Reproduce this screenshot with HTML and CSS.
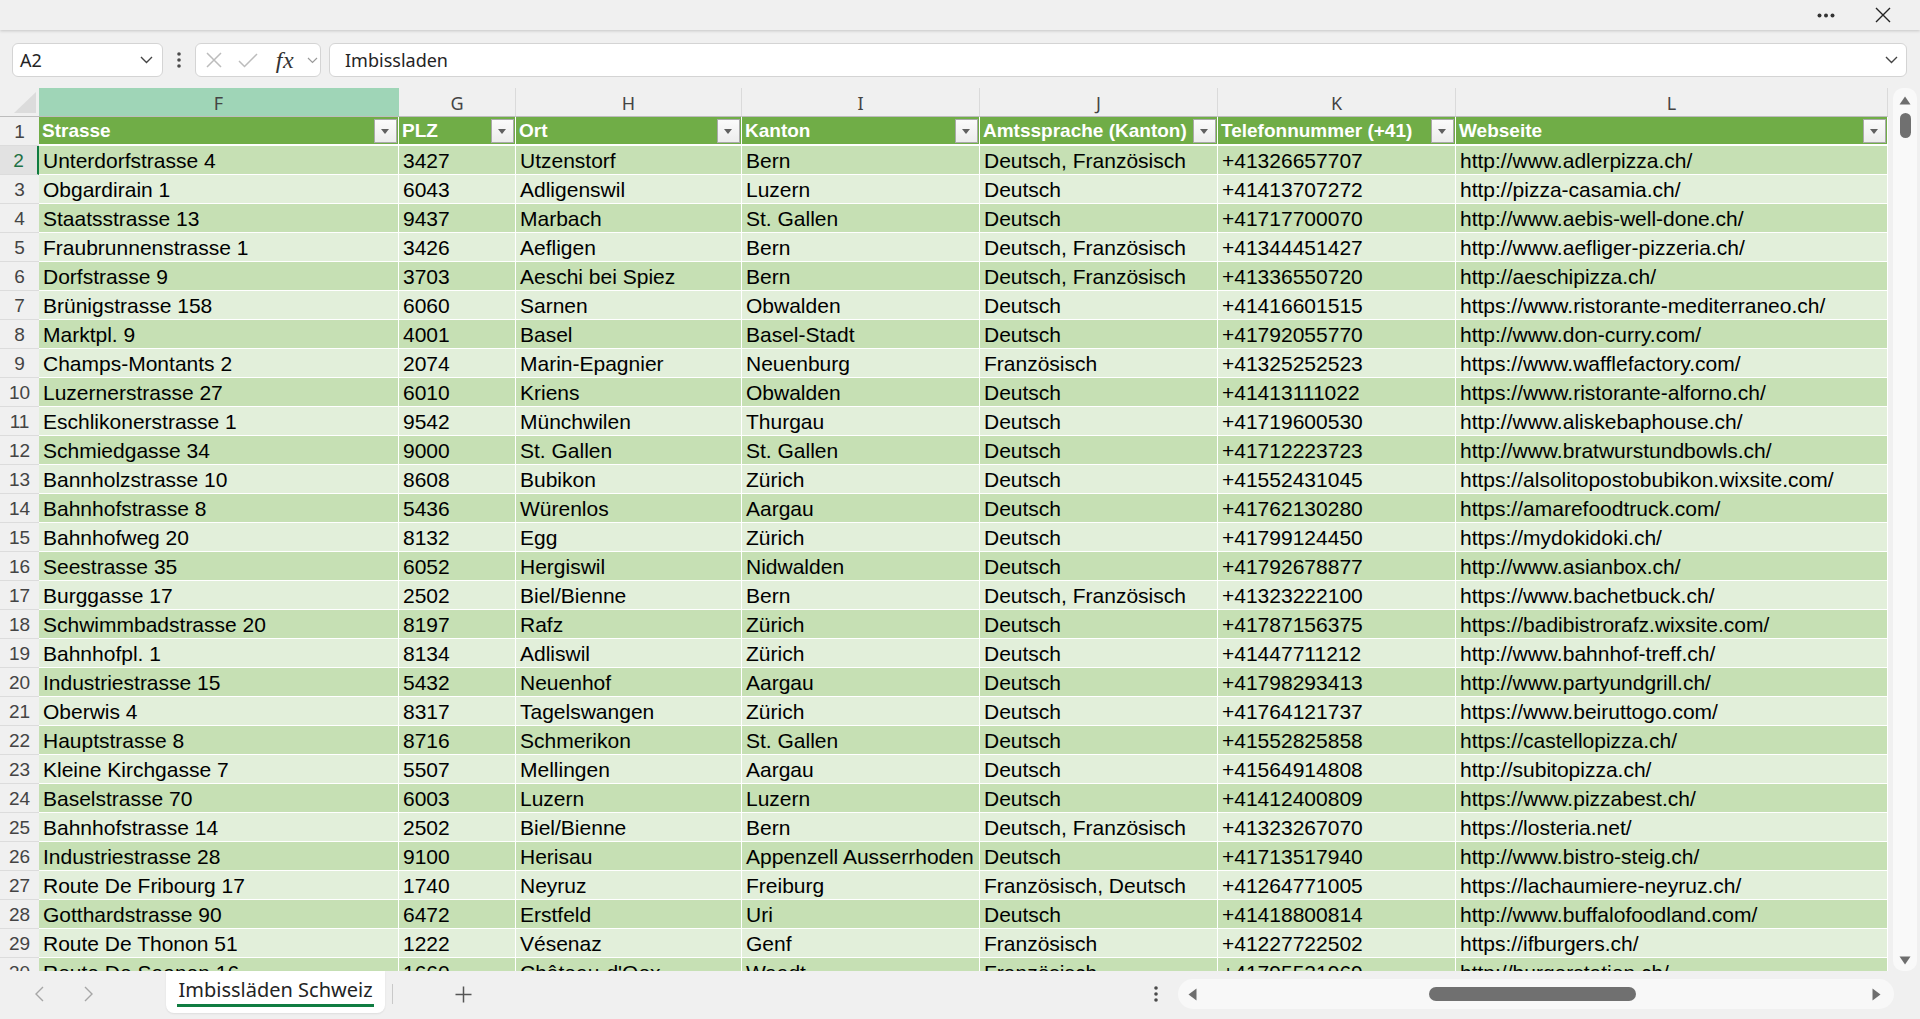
FILE: index.html
```html
<!DOCTYPE html>
<html lang="de">
<head>
<meta charset="utf-8">
<title>Imbissläden Schweiz</title>
<link rel="stylesheet" href="styles.css">
</head>
<body>
<div class="app">
  <header class="topbar">
    <svg class="ic-more" width="18" height="5" viewBox="0 0 18 5"><circle cx="2.5" cy="2.5" r="2"/><circle cx="9" cy="2.5" r="2"/><circle cx="15.5" cy="2.5" r="2"/></svg>
    <svg class="ic-close" width="16" height="16" viewBox="0 0 16 16"><path d="M1 1L15 15M15 1L1 15"/></svg>
  </header>

  <div class="fbar">
    <div class="namebox"><span>A2</span><svg width="13" height="8" viewBox="0 0 13 8"><path d="M1 1L6.5 6.5L12 1"/></svg></div>
    <div class="vdots"><svg width="4" height="16" viewBox="0 0 4 16"><circle cx="2" cy="2" r="1.8"/><circle cx="2" cy="8" r="1.8"/><circle cx="2" cy="14" r="1.8"/></svg></div>
    <div class="fxbox">
      <span class="fx-x"><svg width="16" height="16" viewBox="0 0 16 16"><path d="M1 1L15 15M15 1L1 15"/></svg></span>
      <span class="fx-ok"><svg width="20" height="15" viewBox="0 0 20 15"><path d="M1 8L6.5 13.5L19 1"/></svg></span>
      <span class="fx-f">fx</span>
      <span class="fx-dd"><svg width="11" height="7" viewBox="0 0 11 7"><path d="M1 1L5.5 5.5L10 1"/></svg></span>
    </div>
    <div class="finput"><span>Imbissladen</span><svg width="13" height="8" viewBox="0 0 13 8"><path d="M1 1L6.5 6.5L12 1"/></svg></div>
  </div>

  <main class="work">
    <div class="sheet">
      <div class="row colhead">
        <div class="corner"><svg width="22" height="21" viewBox="0 0 22 21"><path d="M0 21L22 21L22 0Z"/></svg></div>
        <div class="ch sel">F</div><div class="ch">G</div><div class="ch">H</div><div class="ch">I</div><div class="ch">J</div><div class="ch">K</div><div class="ch">L</div>
      </div>
      <div class="row hdr">
        <div class="rh">1</div>
        <div class="c"><span>Strasse</span><i class="flt"></i></div>
        <div class="c"><span>PLZ</span><i class="flt"></i></div>
        <div class="c"><span>Ort</span><i class="flt"></i></div>
        <div class="c"><span>Kanton</span><i class="flt"></i></div>
        <div class="c"><span>Amtssprache (Kanton)</span><i class="flt"></i></div>
        <div class="c"><span>Telefonnummer (+41)</span><i class="flt"></i></div>
        <div class="c"><span>Webseite</span><i class="flt"></i></div>
      </div>
      <div class="row d1 cur"><div class="rh">2</div><div class="c">Unterdorfstrasse 4</div><div class="c">3427</div><div class="c">Utzenstorf</div><div class="c">Bern</div><div class="c">Deutsch, Französisch</div><div class="c">+41326657707</div><div class="c">http://www.adlerpizza.ch/</div></div>
      <div class="row d2"><div class="rh">3</div><div class="c">Obgardirain 1</div><div class="c">6043</div><div class="c">Adligenswil</div><div class="c">Luzern</div><div class="c">Deutsch</div><div class="c">+41413707272</div><div class="c">http://pizza-casamia.ch/</div></div>
      <div class="row d1"><div class="rh">4</div><div class="c">Staatsstrasse 13</div><div class="c">9437</div><div class="c">Marbach</div><div class="c">St. Gallen</div><div class="c">Deutsch</div><div class="c">+41717700070</div><div class="c">http://www.aebis-well-done.ch/</div></div>
      <div class="row d2"><div class="rh">5</div><div class="c">Fraubrunnenstrasse 1</div><div class="c">3426</div><div class="c">Aefligen</div><div class="c">Bern</div><div class="c">Deutsch, Französisch</div><div class="c">+41344451427</div><div class="c">http://www.aefliger-pizzeria.ch/</div></div>
      <div class="row d1"><div class="rh">6</div><div class="c">Dorfstrasse 9</div><div class="c">3703</div><div class="c">Aeschi bei Spiez</div><div class="c">Bern</div><div class="c">Deutsch, Französisch</div><div class="c">+41336550720</div><div class="c">http://aeschipizza.ch/</div></div>
      <div class="row d2"><div class="rh">7</div><div class="c">Brünigstrasse 158</div><div class="c">6060</div><div class="c">Sarnen</div><div class="c">Obwalden</div><div class="c">Deutsch</div><div class="c">+41416601515</div><div class="c">https://www.ristorante-mediterraneo.ch/</div></div>
      <div class="row d1"><div class="rh">8</div><div class="c">Marktpl. 9</div><div class="c">4001</div><div class="c">Basel</div><div class="c">Basel-Stadt</div><div class="c">Deutsch</div><div class="c">+41792055770</div><div class="c">http://www.don-curry.com/</div></div>
      <div class="row d2"><div class="rh">9</div><div class="c">Champs-Montants 2</div><div class="c">2074</div><div class="c">Marin-Epagnier</div><div class="c">Neuenburg</div><div class="c">Französisch</div><div class="c">+41325252523</div><div class="c">https://www.wafflefactory.com/</div></div>
      <div class="row d1"><div class="rh">10</div><div class="c">Luzernerstrasse 27</div><div class="c">6010</div><div class="c">Kriens</div><div class="c">Obwalden</div><div class="c">Deutsch</div><div class="c">+41413111022</div><div class="c">https://www.ristorante-alforno.ch/</div></div>
      <div class="row d2"><div class="rh">11</div><div class="c">Eschlikonerstrasse 1</div><div class="c">9542</div><div class="c">Münchwilen</div><div class="c">Thurgau</div><div class="c">Deutsch</div><div class="c">+41719600530</div><div class="c">http://www.aliskebaphouse.ch/</div></div>
      <div class="row d1"><div class="rh">12</div><div class="c">Schmiedgasse 34</div><div class="c">9000</div><div class="c">St. Gallen</div><div class="c">St. Gallen</div><div class="c">Deutsch</div><div class="c">+41712223723</div><div class="c">http://www.bratwurstundbowls.ch/</div></div>
      <div class="row d2"><div class="rh">13</div><div class="c">Bannholzstrasse 10</div><div class="c">8608</div><div class="c">Bubikon</div><div class="c">Zürich</div><div class="c">Deutsch</div><div class="c">+41552431045</div><div class="c">https://alsolitopostobubikon.wixsite.com/</div></div>
      <div class="row d1"><div class="rh">14</div><div class="c">Bahnhofstrasse 8</div><div class="c">5436</div><div class="c">Würenlos</div><div class="c">Aargau</div><div class="c">Deutsch</div><div class="c">+41762130280</div><div class="c">https://amarefoodtruck.com/</div></div>
      <div class="row d2"><div class="rh">15</div><div class="c">Bahnhofweg 20</div><div class="c">8132</div><div class="c">Egg</div><div class="c">Zürich</div><div class="c">Deutsch</div><div class="c">+41799124450</div><div class="c">https://mydokidoki.ch/</div></div>
      <div class="row d1"><div class="rh">16</div><div class="c">Seestrasse 35</div><div class="c">6052</div><div class="c">Hergiswil</div><div class="c">Nidwalden</div><div class="c">Deutsch</div><div class="c">+41792678877</div><div class="c">http://www.asianbox.ch/</div></div>
      <div class="row d2"><div class="rh">17</div><div class="c">Burggasse 17</div><div class="c">2502</div><div class="c">Biel/Bienne</div><div class="c">Bern</div><div class="c">Deutsch, Französisch</div><div class="c">+41323222100</div><div class="c">https://www.bachetbuck.ch/</div></div>
      <div class="row d1"><div class="rh">18</div><div class="c">Schwimmbadstrasse 20</div><div class="c">8197</div><div class="c">Rafz</div><div class="c">Zürich</div><div class="c">Deutsch</div><div class="c">+41787156375</div><div class="c">https://badibistrorafz.wixsite.com/</div></div>
      <div class="row d2"><div class="rh">19</div><div class="c">Bahnhofpl. 1</div><div class="c">8134</div><div class="c">Adliswil</div><div class="c">Zürich</div><div class="c">Deutsch</div><div class="c">+41447711212</div><div class="c">http://www.bahnhof-treff.ch/</div></div>
      <div class="row d1"><div class="rh">20</div><div class="c">Industriestrasse 15</div><div class="c">5432</div><div class="c">Neuenhof</div><div class="c">Aargau</div><div class="c">Deutsch</div><div class="c">+41798293413</div><div class="c">http://www.partyundgrill.ch/</div></div>
      <div class="row d2"><div class="rh">21</div><div class="c">Oberwis 4</div><div class="c">8317</div><div class="c">Tagelswangen</div><div class="c">Zürich</div><div class="c">Deutsch</div><div class="c">+41764121737</div><div class="c">https://www.beiruttogo.com/</div></div>
      <div class="row d1"><div class="rh">22</div><div class="c">Hauptstrasse 8</div><div class="c">8716</div><div class="c">Schmerikon</div><div class="c">St. Gallen</div><div class="c">Deutsch</div><div class="c">+41552825858</div><div class="c">https://castellopizza.ch/</div></div>
      <div class="row d2"><div class="rh">23</div><div class="c">Kleine Kirchgasse 7</div><div class="c">5507</div><div class="c">Mellingen</div><div class="c">Aargau</div><div class="c">Deutsch</div><div class="c">+41564914808</div><div class="c">http://subitopizza.ch/</div></div>
      <div class="row d1"><div class="rh">24</div><div class="c">Baselstrasse 70</div><div class="c">6003</div><div class="c">Luzern</div><div class="c">Luzern</div><div class="c">Deutsch</div><div class="c">+41412400809</div><div class="c">https://www.pizzabest.ch/</div></div>
      <div class="row d2"><div class="rh">25</div><div class="c">Bahnhofstrasse 14</div><div class="c">2502</div><div class="c">Biel/Bienne</div><div class="c">Bern</div><div class="c">Deutsch, Französisch</div><div class="c">+41323267070</div><div class="c">https://losteria.net/</div></div>
      <div class="row d1"><div class="rh">26</div><div class="c">Industriestrasse 28</div><div class="c">9100</div><div class="c">Herisau</div><div class="c">Appenzell Ausserrhoden</div><div class="c">Deutsch</div><div class="c">+41713517940</div><div class="c">http://www.bistro-steig.ch/</div></div>
      <div class="row d2"><div class="rh">27</div><div class="c">Route De Fribourg 17</div><div class="c">1740</div><div class="c">Neyruz</div><div class="c">Freiburg</div><div class="c">Französisch, Deutsch</div><div class="c">+41264771005</div><div class="c">https://lachaumiere-neyruz.ch/</div></div>
      <div class="row d1"><div class="rh">28</div><div class="c">Gotthardstrasse 90</div><div class="c">6472</div><div class="c">Erstfeld</div><div class="c">Uri</div><div class="c">Deutsch</div><div class="c">+41418800814</div><div class="c">http://www.buffalofoodland.com/</div></div>
      <div class="row d2"><div class="rh">29</div><div class="c">Route De Thonon 51</div><div class="c">1222</div><div class="c">Vésenaz</div><div class="c">Genf</div><div class="c">Französisch</div><div class="c">+41227722502</div><div class="c">https://ifburgers.ch/</div></div>
      <div class="row d1"><div class="rh">30</div><div class="c">Route De Saanen 16</div><div class="c">1660</div><div class="c">Château-d'Oex</div><div class="c">Waadt</div><div class="c">Französisch</div><div class="c">+41795521969</div><div class="c">http://burgerstation.ch/</div></div>
    </div>
    <div class="vscroll">
      <svg class="arr" width="12" height="9" viewBox="0 0 12 9"><path d="M6 0.5L11.5 8.5L0.5 8.5Z"/></svg>
      <div class="vthumb"></div>
      <div class="vfill"></div>
      <svg class="arr" width="12" height="9" viewBox="0 0 12 9"><path d="M0.5 0.5L11.5 0.5L6 8.5Z"/></svg>
    </div>
  </main>

  <footer class="tabbar">
    <div class="nav">
      <svg width="9" height="16" viewBox="0 0 9 16"><path d="M8 1L1 8L8 15"/></svg>
      <svg width="9" height="16" viewBox="0 0 9 16"><path d="M1 1L8 8L1 15"/></svg>
    </div>
    <div class="tab"><span>Imbissläden Schweiz</span></div>
    <div class="tabsep"></div>
    <div class="addtab"><svg width="17" height="17" viewBox="0 0 17 17"><path d="M8.5 0.5V16.5M0.5 8.5H16.5"/></svg></div>
    <div class="tabspace"></div>
    <div class="hdots"><svg width="4" height="16" viewBox="0 0 4 16"><circle cx="2" cy="2" r="1.8"/><circle cx="2" cy="8" r="1.8"/><circle cx="2" cy="14" r="1.8"/></svg></div>
    <div class="hscroll">
      <svg class="arr" width="9" height="13" viewBox="0 0 9 13"><path d="M8.5 0.5L8.5 12.5L0.5 6.5Z"/></svg>
      <div class="hpre"></div>
      <div class="hthumb"></div>
      <div class="hpost"></div>
      <svg class="arr" width="9" height="13" viewBox="0 0 9 13"><path d="M0.5 0.5L8.5 6.5L0.5 12.5Z"/></svg>
    </div>
  </footer>
</div>
</body>
</html>
```
FILE: styles.css
```css
* { box-sizing: border-box; }
html, body { margin: 0; padding: 0; }
body {
  background: #f0f0f0;
  font-family: "Liberation Sans", Arial, sans-serif;
  color: #000;
  width: 1920px;
  height: 1019px;
  overflow: hidden;
}
.app { display: flex; flex-direction: column; height: 1019px; }

/* top bar */
.topbar {
  height: 30px;
  flex: none;
  background: #f0f0f0;
  display: flex;
  align-items: center;
  justify-content: flex-end;
  padding-right: 29px;
  gap: 40px;
  box-shadow: 0 1px 3px rgba(0,0,0,0.18);
  position: relative;
  z-index: 2;
}
.ic-more { fill: #333; }
.ic-close { stroke: #222; stroke-width: 1.4; fill: none; }

/* formula bar */
.fbar {
  flex: none;
  height: 34px;
  margin-top: 13px;
  padding: 0 13px 0 12px;
  display: flex;
  align-items: stretch;
  font-family: "Noto Sans", "Open Sans", sans-serif;
  font-size: 18px;
  color: #242424;
}
.namebox {
  width: 151px;
  background: #fff;
  border: 1px solid #d4d4d4;
  border-radius: 6px;
  display: flex;
  align-items: center;
  justify-content: space-between;
  padding: 0 9px 0 7px;
}
.namebox svg, .finput svg { stroke: #444; stroke-width: 1.4; fill: none; }
.vdots { width: 32px; display: flex; align-items: center; justify-content: center; }
.vdots svg, .hdots svg { fill: #4a4a4a; }
.fxbox {
  width: 126px;
  background: #fff;
  border: 1px solid #d4d4d4;
  border-radius: 6px;
  display: flex;
  align-items: center;
}
.fxbox span { display: flex; justify-content: center; align-items: center; }
.fx-x { width: 36px; }
.fx-x svg { stroke: #bcbcbc; stroke-width: 1.5; fill: none; }
.fx-ok { width: 32px; }
.fx-ok svg { stroke: #bcbcbc; stroke-width: 1.5; fill: none; }
.fx-f {
  width: 42px;
  font-family: "Liberation Serif", "DejaVu Serif", serif;
  font-style: italic;
  font-size: 24px;
  color: #333;
  letter-spacing: 0.5px;
}
.fx-dd { width: 12px; }
.fx-dd svg { stroke: #9a9a9a; stroke-width: 1.2; fill: none; }
.finput {
  flex: 1;
  margin-left: 8px;
  background: #fff;
  border: 1px solid #d4d4d4;
  border-radius: 6px;
  display: flex;
  align-items: center;
  justify-content: space-between;
  padding: 0 8px 0 15px;
}

/* worksheet */
.work {
  flex: none;
  height: 883px;
  margin-top: 11px;
  display: flex;
  overflow: hidden;
}
.sheet {
  width: 1888px;
  flex: none;
  height: 883px;
  overflow: hidden;
}
.row {
  display: grid;
  grid-template-columns: 39px 360px 117px 226px 238px 238px 238px 432px;
  height: 29px;
}
.colhead { height: 29px; }
.corner {
  background: #f0f0f0;
  border-bottom: 1px solid #bdbdbd;
  display: flex;
  align-items: flex-end;
  justify-content: flex-end;
  padding: 0 3px 3px 0;
}
.corner svg { fill: #dcdcdc; }
.ch {
  background: #f0f0f0;
  border-bottom: 1px solid #bdbdbd;
  border-right: 1px solid #dadada;
  font-family: "Noto Sans", "Open Sans", sans-serif;
  font-size: 18px;
  color: #444;
  display: flex;
  align-items: center;
  justify-content: center;
  padding-top: 1px;
}
.ch.sel { background: #9fd5b7; border-right-color: #9fd5b7; }

.rh {
  background: #f0f0f0;
  border-bottom: 1px solid #dcdcdc;
  color: #444;
  font-size: 19px;
  display: flex;
  align-items: center;
  justify-content: center;
  padding-top: 1px;
}
.c {
  border-right: 1px solid #fff;
  border-bottom: 1px solid #fff;
  padding: 1px 4px 0 4px;
  font-size: 21px;
  line-height: 27px;
  white-space: nowrap;
  overflow: hidden;
}
.d1 .c { background: #c6e0b4; }
.d2 .c { background: #e2efda; }
.cur .rh { background: #e2e2e2; color: #1e7145; border-right: 2px solid #107c41; }

.hdr { height: 29px; }
.hdr .rh { border-bottom: 1px solid #dcdcdc; }
.hdr .c {
  background: #70ad47;
  border-bottom: 2px solid #fff;
  color: #fff;
  font-weight: bold;
  font-size: 19px;
  display: flex;
  align-items: center;
  justify-content: space-between;
  padding: 0 1px 0 3px;
  line-height: 25px;
}
.flt {
  flex: none;
  width: 23px;
  height: 24px;
  margin-top: 1px;
  border: 1px solid #a9a9a9;
  background: linear-gradient(#fbfbfb, #ececec);
  position: relative;
}
.flt::after {
  content: "";
  position: absolute;
  left: 6px;
  top: 9px;
  border-left: 4.5px solid transparent;
  border-right: 4.5px solid transparent;
  border-top: 5px solid #606060;
}

/* vertical scrollbar */
.vscroll {
  flex: none;
  width: 24px;
  margin-left: 5px;
  height: 883px;
  background: #f9f9f9;
  border-radius: 10px;
  display: flex;
  flex-direction: column;
  align-items: center;
  padding: 8px 0 6px 0;
}
.vscroll .arr { fill: #6e6e6e; flex: none; }
.vthumb {
  width: 11px;
  height: 25px;
  margin-top: 8px;
  background: #707070;
  border-radius: 6px;
  flex: none;
}
.vfill { flex: 1; }

/* tab bar */
.tabbar {
  flex: 1;
  display: flex;
  align-items: flex-start;
  background: #f0f0f0;
  font-family: "Noto Sans", "Open Sans", sans-serif;
}
.nav {
  width: 166px;
  height: 46px;
  display: flex;
  align-items: center;
  gap: 40px;
  padding-left: 35px;
}
.nav svg { stroke: #a6a6a6; stroke-width: 1.4; fill: none; }
.tab {
  width: 219px;
  height: 42px;
  background: #fff;
  border-radius: 0 0 8px 8px;
  box-shadow: 0 1px 2px rgba(0,0,0,0.08);
  display: flex;
  justify-content: center;
  padding-top: 5px;
}
.tab span {
  font-size: 20px;
  color: #242424;
  height: 31px;
  border-bottom: 3px solid #107c41;
  padding: 0 1px;
  line-height: 27px;
}
.tabsep {
  width: 1px;
  height: 20px;
  margin: 13px 0 0 7px;
  background: #c9c9c9;
}
.addtab {
  width: 140px;
  height: 46px;
  display: flex;
  align-items: center;
  justify-content: center;
}
.addtab svg { stroke: #555; stroke-width: 1.5; fill: none; }
.tabspace { flex: 1; }
.hdots {
  width: 26px;
  height: 46px;
  display: flex;
  align-items: center;
  justify-content: center;
  margin-right: 9px;
}
.hscroll {
  width: 716px;
  height: 30px;
  margin: 8px 26px 0 0;
  background: #f8f8f8;
  border-radius: 15px;
  display: flex;
  align-items: center;
  padding: 0 13px 0 10px;
}
.hscroll .arr { fill: #6e6e6e; flex: none; }
.hpre { width: 232px; flex: none; }
.hthumb { width: 207px; height: 14px; background: #707070; border-radius: 7px; flex: none; }
.hpost { flex: 1; }
```
